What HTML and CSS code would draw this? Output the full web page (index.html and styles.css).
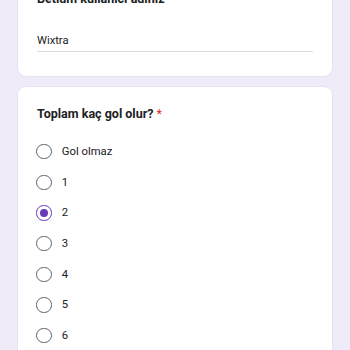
FILE: index.html
```html
<!DOCTYPE html>
<html lang="tr">
<head>
<meta charset="utf-8">
<link rel="stylesheet" href="styles.css">
</head>
<body>
<div class="page">
  <div class="card card-first">
    <div class="q-title">Betium kullanıcı adınız</div>
    <div class="answer">Wixtra</div>
  </div>
  <div class="card card-second">
    <div class="q-title">Toplam kaç gol olur? <span class="req">*</span></div>
    <div class="options">
      <div class="opt"><span class="radio"></span><span class="lbl">Gol olmaz</span></div>
      <div class="opt"><span class="radio"></span><span class="lbl">1</span></div>
      <div class="opt"><span class="radio checked"></span><span class="lbl">2</span></div>
      <div class="opt"><span class="radio"></span><span class="lbl">3</span></div>
      <div class="opt"><span class="radio"></span><span class="lbl">4</span></div>
      <div class="opt"><span class="radio"></span><span class="lbl">5</span></div>
      <div class="opt"><span class="radio"></span><span class="lbl">6</span></div>
    </div>
  </div>
</div>
</body>
</html>
```
FILE: styles.css
```css
html, body {
  margin: 0;
  padding: 0;
  background: #f0ebf8;
  font-family: Roboto, "Noto Sans", Arial, sans-serif;
  color: #202124;
  overflow: hidden;
  height: 350px;
}
.page {
  margin-top: -28.3px;
  padding: 0 18px;
  display: flex;
  flex-direction: column;
  gap: 11px;
}
.card {
  background: #fff;
  border-radius: 8px;
  box-shadow: 0 0 0 1px #e8e3f0, 0 1px 2px rgba(0, 0, 0, 0.04);
  padding: 18px 19px 24.5px 19px;
}
.q-title {
  font-size: 12.5px;
  font-weight: 700;
  line-height: 18px;
  color: #202124;
}
.req {
  color: #d93025;
  font-weight: 400;
}
.answer {
  margin-top: 25.5px;
  font-size: 11.2px;
  line-height: 16px;
  padding-bottom: 1.3px;
  border-bottom: 1px solid #dcdcdf;
  color: #202124;
}
.card-second {
  padding-bottom: 40px;
}
.options {
  margin-top: 13.3px;
  display: flex;
  flex-direction: column;
}
.opt {
  height: 30.67px;
  display: flex;
  align-items: center;
  gap: 10px;
}
.radio {
  box-sizing: border-box;
  width: 15.4px;
  height: 15.4px;
  border: 1.6px solid #5f6368;
  border-radius: 50%;
  margin-left: -0.6px;
  display: flex;
  align-items: center;
  justify-content: center;
  flex: none;
}
.radio.checked {
  border-color: #673ab7;
}
.radio.checked::after {
  content: "";
  width: 7.8px;
  height: 7.8px;
  border-radius: 50%;
  background: #673ab7;
}
.lbl {
  font-size: 11.3px;
  line-height: 16px;
  color: #202124;
  padding-top: 1px;
}
```
